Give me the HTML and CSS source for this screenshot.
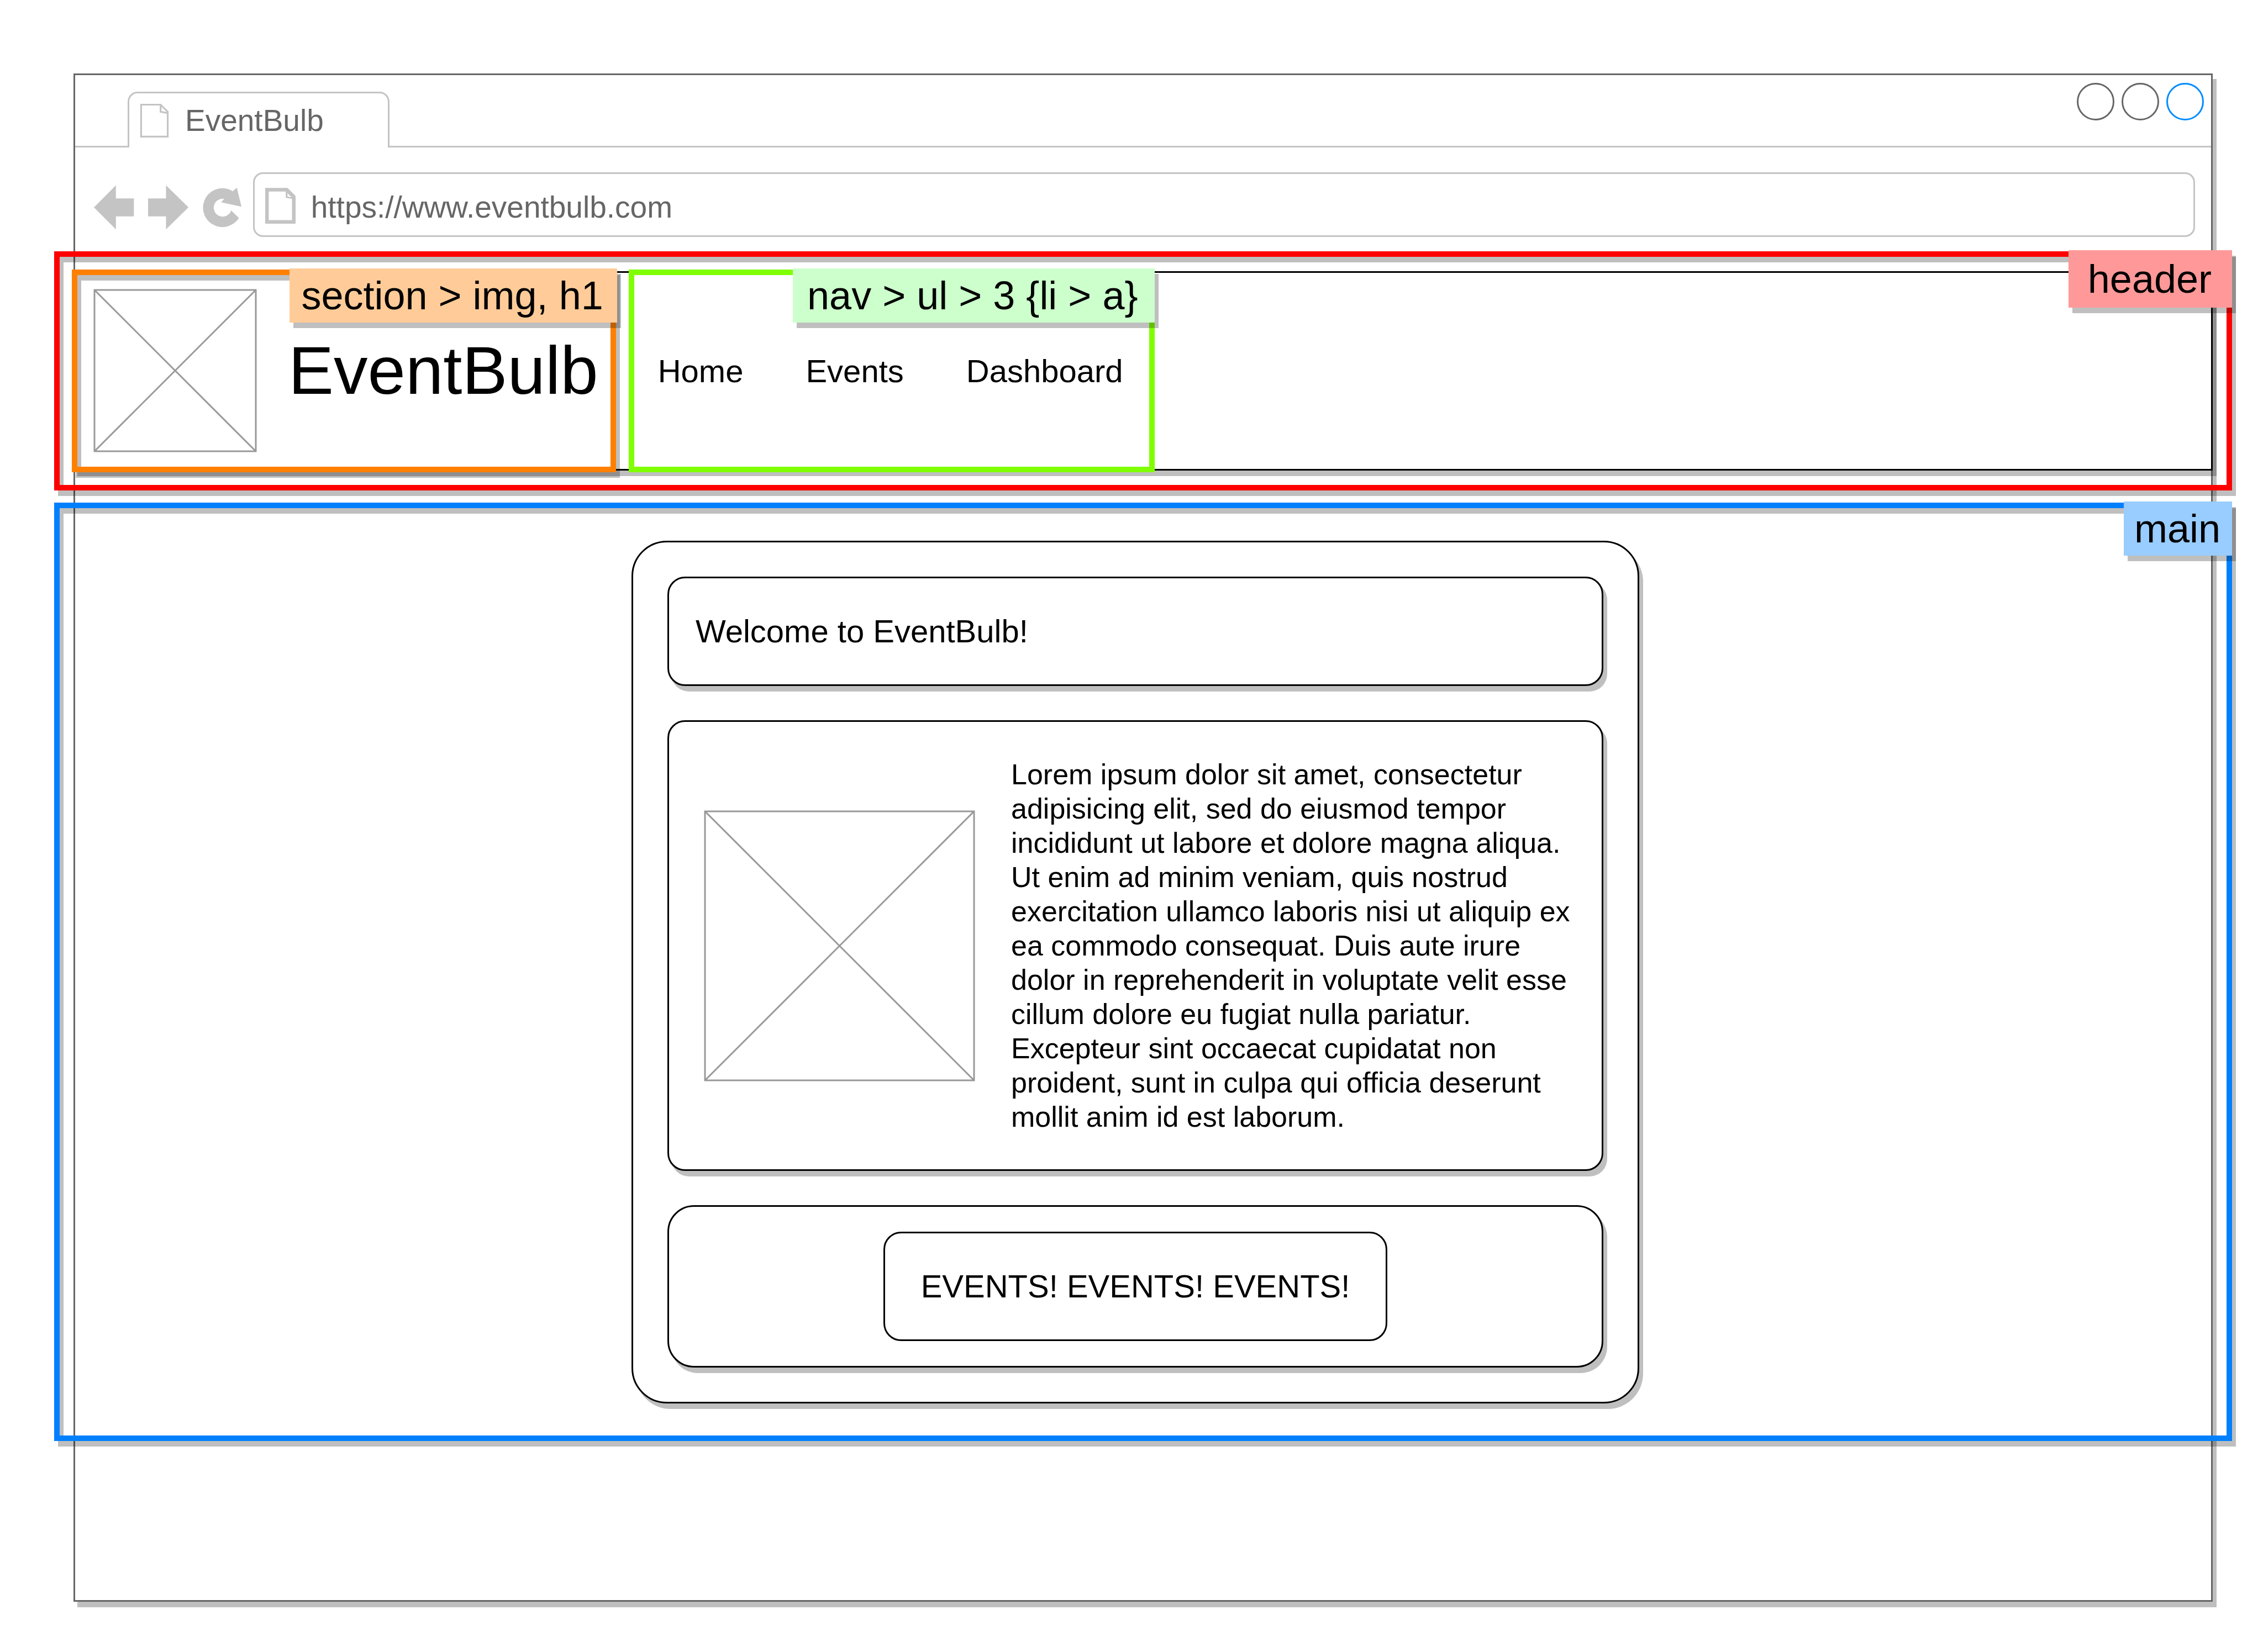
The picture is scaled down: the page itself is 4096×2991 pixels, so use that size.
FILE: index.html
```html
<!DOCTYPE html>
<html lang="en">
<head>
<meta charset="utf-8">
<title>EventBulb wireframe</title>
<link rel="stylesheet" href="styles.css">
</head>
<body>
<div class="window">
  <div class="tab-bar">
    <div class="tab">
      <svg class="tab-icon" viewBox="311 231 66 77" aria-hidden="true"><path d="M314 234H358L374 250V306H314ZM358 234V250L374 253" fill="none" stroke="#c4c4c4" stroke-width="4"/></svg>
      <span>EventBulb</span>
    </div>
    <div class="window-controls">
      <button class="control" type="button" aria-label="Minimize"></button>
      <button class="control" type="button" aria-label="Maximize"></button>
      <button class="control control-close" type="button" aria-label="Close"></button>
    </div>
  </div>
  <div class="toolbar">
    <div class="history">
      <button class="icon-button" type="button" aria-label="Back"><svg viewBox="209 400 90 112"><path d="M209 462L258 413V442H298V482H258V511Z"/></svg></button>
      <button class="icon-button" type="button" aria-label="Forward"><svg viewBox="330 400 90 112"><path d="M420 462L370 413V442H330V482H370V511Z"/></svg></button>
      <button class="icon-button" type="button" aria-label="Reload"><svg viewBox="451 400 88 112"><path d="M519 426A43.300 43.300 0 1 0 532.800 485.700L515.600 469A20 20 0 1 1 500 443L493.200 450.700L538.500 460.700L528.200 418Z"/></svg></button>
    </div>
    <label class="address">
      <svg class="address-icon" viewBox="590 414 68 84" aria-hidden="true"><path d="M638 422H594V494H654V440" fill="none" stroke="#c4c4c4" stroke-width="8"/><path d="M636 418H640L658 436V444L636 440ZM640 430V437L649 439Z" fill="#c4c4c4" fill-rule="evenodd"/></svg>
      <input class="address-input" type="text" value="https://www.eventbulb.com" aria-label="Address">
    </label>
  </div>

  <header class="outline outline-header">
    <div class="header-bar">
      <section class="outline outline-section">
        <svg class="logo" viewBox="0 0 296 296" role="img" aria-label="Logo"><path d="M2 2H294V294H2ZL294 294M294 2L2 294"/></svg>
        <h1 class="title">EventBulb</h1>
        <span class="tag tag-section">section &gt; img, h1</span>
      </section>
      <nav class="outline outline-nav">
        <ul class="nav-list">
          <li><a href="#home">Home</a></li>
          <li><a href="#events">Events</a></li>
          <li><a href="#dashboard">Dashboard</a></li>
        </ul>
        <span class="tag tag-nav">nav &gt; ul &gt; 3 {li &gt; a}</span>
      </nav>
    </div>
    <span class="tag tag-header">header</span>
  </header>

  <main class="outline outline-main">
    <div class="card">
      <h2 class="panel welcome">Welcome to EventBulb!</h2>
      <article class="panel about">
        <svg class="picture" viewBox="0 0 491 491" role="img" aria-label="Picture"><path d="M2 2H489V489H2ZL489 489M489 2L2 489"/></svg>
        <p class="about-text">Lorem ipsum dolor sit amet, consectetur adipisicing elit, sed do eiusmod tempor incididunt ut labore et dolore magna aliqua. Ut enim ad minim veniam, quis nostrud exercitation ullamco laboris nisi ut aliquip ex ea commodo consequat. Duis aute irure dolor in reprehenderit in voluptate velit esse cillum dolore eu fugiat nulla pariatur. Excepteur sint occaecat cupidatat non proident, sunt in culpa qui officia deserunt mollit anim id est laborum.</p>
      </article>
      <div class="panel actions">
        <button class="events-button" type="button">EVENTS! EVENTS! EVENTS!</button>
      </div>
    </div>
    <span class="tag tag-main">main</span>
  </main>
</div>
</body>
</html>
```

FILE: styles.css
```css
:root {
  --shade: rgba(0, 0, 0, 0.25);
  --drop: 7px 10px 0 var(--shade);
  --chrome: #c4c4c4;
  --ink: #666;
}

* {
  box-sizing: border-box;
}

body {
  display: flex;
  min-height: 100vh;
  margin: 0;
  padding: 133px 91px 91px 133px;
  background: #fff;
  color: #000;
  font-family: "Liberation Sans", Arial, Helvetica, sans-serif;
  font-size: 58px;
}

button,
input {
  margin: 0;
  padding: 0;
  border: 0;
  background: none;
  color: inherit;
  font: inherit;
}

svg {
  display: block;
  flex: none;
}

/* Browser window */
.window {
  flex: 1;
  min-width: 0;
  border: 3px solid var(--ink);
  box-shadow: var(--drop);
}

.tab-bar {
  display: flex;
  justify-content: space-between;
  height: 131px;
  padding: 0 13px 0 95px;
  border-bottom: 3px solid var(--chrome);
}

.tab {
  display: flex;
  align-items: center;
  align-self: flex-end;
  gap: 29px;
  width: 474px;
  height: 101px;
  margin-bottom: -3px;
  padding-left: 19px;
  border: 3px solid var(--chrome);
  border-bottom: 0;
  border-radius: 18px 18px 0 0;
  background: #fff;
  color: var(--ink);
  font-size: 55px;
}

.tab-icon {
  width: 53px;
  height: 62px;
}

.window-controls {
  display: flex;
  gap: 13px;
  padding-top: 14px;
}

.control {
  width: 68px;
  height: 68px;
  border: 3px solid var(--ink);
  border-radius: 50%;
}

.control-close {
  border-color: #008cff;
}

.toolbar {
  display: flex;
  align-items: center;
  gap: 20px;
  padding: 45px 29px 26px 34px;
}

.history {
  display: flex;
  gap: 25px;
}

.icon-button svg {
  width: auto;
  height: 91px;
  fill: var(--chrome);
}

.address {
  display: flex;
  flex: 1;
  align-items: center;
  gap: 28px;
  height: 117px;
  padding: 0 19px;
  border: 3px solid var(--chrome);
  border-radius: 18px;
}

.address-icon {
  width: 55px;
  height: 68px;
}

.address-input {
  flex: 1;
  min-width: 0;
  padding-top: 8px;
  outline: 0;
  color: var(--ink);
  font-size: 55px;
}

/* Coloured annotation boxes and their name tags */
.outline {
  position: relative;
  border: 10px solid;
  box-shadow: var(--drop), inset var(--drop);
}

.tag {
  position: absolute;
  top: -12px;
  right: -10px;
  box-shadow: var(--drop);
  font-size: 72px;
  line-height: 98px;
  white-space: nowrap;
}

.outline-header {
  margin: 0 -38px;
  padding: 26px 25px;
  border-color: #f00;
}

.tag-header {
  padding: 0 37px 0 35px;
  background: #f99;
  line-height: 104px;
}

.header-bar {
  display: flex;
  gap: 23px;
  border: 3px solid #000;
  background: #fff;
  box-shadow: var(--drop);
}

.outline-section {
  display: flex;
  align-items: center;
  gap: 57px;
  margin: -6px 0 -6px -6px;
  padding: 25px 22px 26px 29px;
  border-color: #ff8000;
}

.tag-section {
  right: -12px;
  padding: 0 25px 0 21px;
  background: #fc9;
}

.logo {
  width: 296px;
  height: 296px;
}

.logo,
.picture {
  fill: none;
  stroke: #999;
  stroke-width: 3;
}

.title {
  margin: 0;
  font-size: 123px;
  font-weight: 400;
  line-height: 144px;
}

.outline-nav {
  display: flex;
  align-items: center;
  margin: -6px 0;
  padding: 0 47px 0 43px;
  border-color: #80ff00;
  box-shadow: none;
}

.tag-nav {
  padding: 0 30px 0 26px;
  background: #cfc;
}

.nav-list {
  display: flex;
  gap: 113px;
  margin: 0;
  padding: 0;
  list-style: none;
}

.nav-list a {
  color: inherit;
  text-decoration: none;
}

.outline-main {
  margin: 22px -38px 0;
  padding: 59px 28px 58px 0;
  border-color: #0080ff;
}

.tag-main {
  padding: 0 21px 0 19px;
  background: #9cf;
}

/* Page content */
.card {
  display: flex;
  flex-direction: column;
  gap: 62px;
  max-width: 1824px;
  margin: 0 auto;
  padding: 62px;
  border: 3px solid #000;
  border-radius: 64px;
  background: #fff;
  box-shadow: var(--drop);
}

.panel {
  border: 3px solid #000;
  border-radius: 32px;
  background: #fff;
  box-shadow: var(--drop);
}

.welcome {
  margin: 0;
  padding: 62px 48px;
  font-size: 58px;
  font-weight: 400;
  line-height: 68px;
}

.about {
  display: flex;
  align-items: center;
  gap: 65px;
  padding: 64px 42px 64px 63px;
}

.picture {
  width: 491px;
  height: 491px;
}

.about-text {
  margin: 0;
  font-size: 52px;
  line-height: 62px;
}

.actions {
  display: flex;
  justify-content: center;
  padding: 45px;
  border-radius: 48px;
}

.events-button {
  padding: 62px 65px;
  border: 3px solid #000;
  border-radius: 32px;
  line-height: 68px;
}
```
